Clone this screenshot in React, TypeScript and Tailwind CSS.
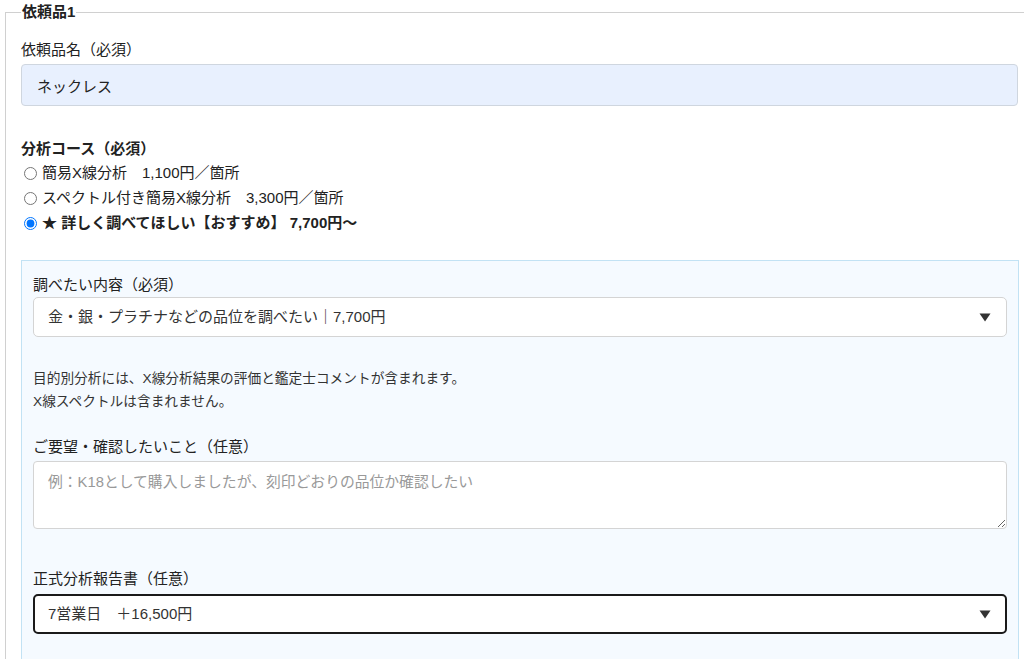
import { useState } from 'react';

const font = { fontFamily: '"Liberation Sans", "Noto Sans CJK JP", sans-serif' };

const courses = [
  { id: 'simple', label: '簡易X線分析　1,100円／箇所' },
  { id: 'spectrum', label: 'スペクトル付き簡易X線分析　3,300円／箇所' },
  { id: 'detail', label: '★ 詳しく調べてほしい【おすすめ】 7,700円〜', bold: true },
];

function Caret() {
  return (
    <svg width="12" height="9" viewBox="0 0 12 9" className="shrink-0">
      <path d="M0.5 0.5 H11.5 L6 8.5 Z" fill="#333" />
    </svg>
  );
}

function FakeSelect({ value, focused }: { value: string; focused?: boolean }) {
  return (
    <div
      className={`flex items-center justify-between h-[40px] bg-white rounded-[5px] text-[15px] text-[#333] ${
        focused ? 'border-2 border-[#1a1a1a] pl-[13px] pr-[14px]' : 'border border-[#d4d4d4] pl-[14px] pr-[15px]'
      }`}
    >
      <span>{value}</span>
      <Caret />
    </div>
  );
}

export default function App() {
  const [course, setCourse] = useState('detail');

  return (
    <div className="w-[1024px] h-[659px] overflow-hidden bg-white text-[#222]" style={font}>
      <fieldset className="ml-[5px] w-[1030px] border border-[#d0d0d0] px-[15px] pb-8">
        <legend className="px-[1px] text-[15px] font-bold leading-[24px]">依頼品1</legend>

        <label className="block mt-[16px] text-[15px] leading-[20px]">依頼品名（必須）</label>
        <input
          defaultValue="ネックレス"
          className="mt-1 block w-[997px] h-[42px] px-[15px] text-[15px] text-[#222] bg-[#e8f0fe] border border-[#cfd6df] rounded-[4px] outline-none"
        />

        <p className="mt-[33px] text-[15px] font-bold leading-[20px]">分析コース（必須）</p>
        <div className="mt-[2px]">
          {courses.map(c => (
            <label key={c.id} className="flex items-center h-[25px] text-[15px]">
              <input
                type="radio"
                name="course"
                checked={course === c.id}
                onChange={() => setCourse(c.id)}
                className="ml-[3px] mr-[5px] w-[13px] h-[13px]"
              />
              <span className={c.bold ? 'font-bold whitespace-pre' : 'whitespace-pre'}>{c.label}</span>
            </label>
          ))}
        </div>

        <div className="mt-[24px] w-[998px] border border-[#c2e2f4] bg-[#f5faff] px-[11px] pt-[14px] pb-10">
          <p className="text-[15px] leading-[20px]">調べたい内容（必須）</p>
          <div className="mt-[2px]">
            <FakeSelect value="金・銀・プラチナなどの品位を調べたい｜7,700円" />
          </div>

          <div className="mt-[30px] text-[13.7px] leading-[23px] text-[#333]">
            <p>目的別分析には、X線分析結果の評価と鑑定士コメントが含まれます。</p>
            <p>X線スペクトルは含まれません。</p>
          </div>

          <p className="mt-[24px] text-[15px] leading-[20px]">ご要望・確認したいこと（任意）</p>
          <textarea
            placeholder="例：K18として購入しましたが、刻印どおりの品位か確認したい"
            className="mt-1 block w-full h-[68px] px-[14px] py-[10px] text-[14.8px] leading-[20px] bg-white border border-[#d4d4d4] rounded-[4px] placeholder:text-[#999] outline-none"
          />

          <p className="mt-[40px] text-[15px] leading-[20px]">正式分析報告書（任意）</p>
          <div className="mt-[5px]">
            <FakeSelect value="7営業日　＋16,500円" focused />
          </div>
        </div>
      </fieldset>
    </div>
  );
}
